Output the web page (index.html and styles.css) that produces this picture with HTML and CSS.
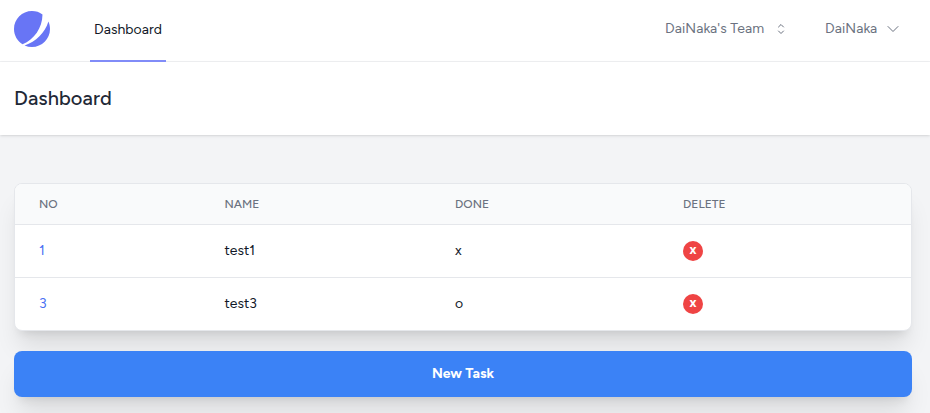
FILE: index.html
```
<!DOCTYPE html>
<html lang="en">
  <head>
    <meta charset="UTF-8" />
    <meta name="viewport" content="width=device-width, initial-scale=1.0" />
    <title>Dashboard</title>
    <link rel="stylesheet" href="styles.css">
  </head>
  <body>
    <nav class="navbar">
      <a href="#" class="logo">
        <svg viewBox="0 0 48 48" fill="#6875f5">
          <path d="M11.395 44.428C4.557 40.198 0 32.632 0 24 0 10.745 10.745 0 24 0a23.891 23.891 0 0113.997 4.502c-.2 17.907-11.097 33.245-26.602 39.926z" />
          <path d="M14.134 45.885A23.914 23.914 0 0024 48c13.255 0 24-10.745 24-24 0-3.516-.756-6.856-2.115-9.866-4.659 15.143-16.608 27.092-31.75 31.751z" />
        </svg>
      </a>
      <a href="#" class="nav-link">Dashboard</a>
      <div class="menus">
        <button type="button" class="team">
          <span>DaiNaka's Team</span>
          <svg viewBox="0 0 24 24">
            <path d="M8.25 15L12 18.75 15.75 15m-7.5-6L12 5.25 15.75 9" />
          </svg>
        </button>
        <button type="button" class="user">
          <span>DaiNaka</span>
          <svg viewBox="0 0 24 24">
            <path d="M19.5 8.25l-7.5 7.5-7.5-7.5" />
          </svg>
        </button>
      </div>
    </nav>

    <header class="page-header">
      <h2>Dashboard</h2>
    </header>

    <main>
      <div class="card">
        <table>
          <thead>
            <tr>
              <th class="col-no">NO</th>
              <th class="col-name">NAME</th>
              <th class="col-done">DONE</th>
              <th>DELETE</th>
            </tr>
          </thead>
          <tbody>
            <tr>
              <td><a href="#">1</a></td>
              <td>test1</td>
              <td>x</td>
              <td><button type="button" class="delete">x</button></td>
            </tr>
            <tr>
              <td><a href="#">3</a></td>
              <td>test3</td>
              <td>o</td>
              <td><button type="button" class="delete">x</button></td>
            </tr>
          </tbody>
        </table>
      </div>
      <button type="button" class="new-task">New Task</button>
    </main>
  </body>
</html>
```

FILE: styles.css
```
* {
  margin: 0;
  padding: 0;
  box-sizing: border-box;
}
body {
  background-color: #f3f4f6;
  color: #111827;
  font-family: Figtree, Lato, "Liberation Sans", sans-serif;
  font-size: 14px;
  line-height: 20px;
  height: 413px;
  overflow: hidden;
}
a {
  text-decoration: none;
}
button {
  border: none;
  background: none;
  color: inherit;
  font: inherit;
  cursor: pointer;
}
.navbar {
  display: flex;
  height: 62px;
  padding: 0 29px 0 14px;
  background-color: white;
  border-bottom: 1px solid #f0f1f3;
}
.logo {
  margin-top: 11px;
  width: 36px;
  height: 36px;
}
.logo svg {
  display: block;
}
.nav-link {
  width: 76px;
  height: 62px;
  margin-left: 40px;
  padding-top: 20px;
  border-bottom: 2px solid #818cf8;
  color: #111827;
  font-weight: 450;
  letter-spacing: 0.05px;
  text-align: center;
}
.menus {
  display: flex;
  margin-left: auto;
  height: 57px;
  color: #6b7280;
  font-weight: 450;
  letter-spacing: 0.08px;
}
.menus button {
  display: flex;
  align-items: center;
  letter-spacing: inherit;
}
.menus span {
  text-align: left;
  white-space: nowrap;
}
.menus .team span {
  width: 100px;
}
.menus .user span {
  width: 52px;
}
.menus svg {
  width: 16px;
  height: 16px;
  margin-left: 8px;
  fill: none;
  stroke: #6b7280;
  stroke-width: 1.5;
  stroke-linecap: round;
  stroke-linejoin: round;
}
.menus .user {
  margin-left: 36px;
}
.page-header {
  height: 73px;
  padding: 24px 14px;
  background-color: white;
  box-shadow: 0 1px 3px 0 rgb(0 0 0 / 0.1), 0 1px 2px -1px rgb(0 0 0 / 0.1);
}
.page-header h2 {
  color: #1f2937;
  font-size: 20px;
  font-weight: 550;
  letter-spacing: 0.08px;
  line-height: 25px;
}
main {
  padding: 48px 18px 0 14px;
}
.card {
  overflow: hidden;
  height: 148px;
  margin-bottom: 20px;
  background-color: white;
  border: 1px solid #e5e7eb;
  border-radius: 8px;
  box-shadow: 0 20px 25px -5px rgb(0 0 0 / 0.1), 0 8px 10px -6px rgb(0 0 0 / 0.1);
}
table {
  width: 100%;
  table-layout: fixed;
  border-collapse: separate;
  border-spacing: 0;
}
th,
td {
  padding: 0 24px;
  text-align: left;
}
th:nth-child(2),
td:nth-child(2) {
  padding-left: 23.5px;
}
th {
  height: 41px;
  background-color: #f9fafb;
  border-bottom: 1px solid #e5e7eb;
  color: #6b7280;
  font-size: 12px;
  font-weight: 500;
}
td {
  height: 52px;
}
tr:first-child td {
  height: 53px;
  border-bottom: 1px solid #e5e7eb;
}
td a {
  color: #4b70f3;
}
.col-no {
  width: 186px;
}
.col-name {
  width: 230px;
}
.col-done {
  width: 228px;
}
.delete {
  display: block;
  width: 20px;
  height: 20px;
  padding-bottom: 2px;
  background-color: #ef4444;
  border-radius: 50%;
  color: white;
  font-family: "Open Sans", sans-serif;
  font-size: 12px;
  font-weight: 700;
  line-height: 18px;
}
.new-task {
  display: block;
  width: 100%;
  height: 46px;
  background-color: #3b82f6;
  border-radius: 8px;
  color: white;
  font-weight: 700;
  box-shadow: 0 20px 25px -5px rgb(0 0 0 / 0.1), 0 8px 10px -6px rgb(0 0 0 / 0.1);
}
```
